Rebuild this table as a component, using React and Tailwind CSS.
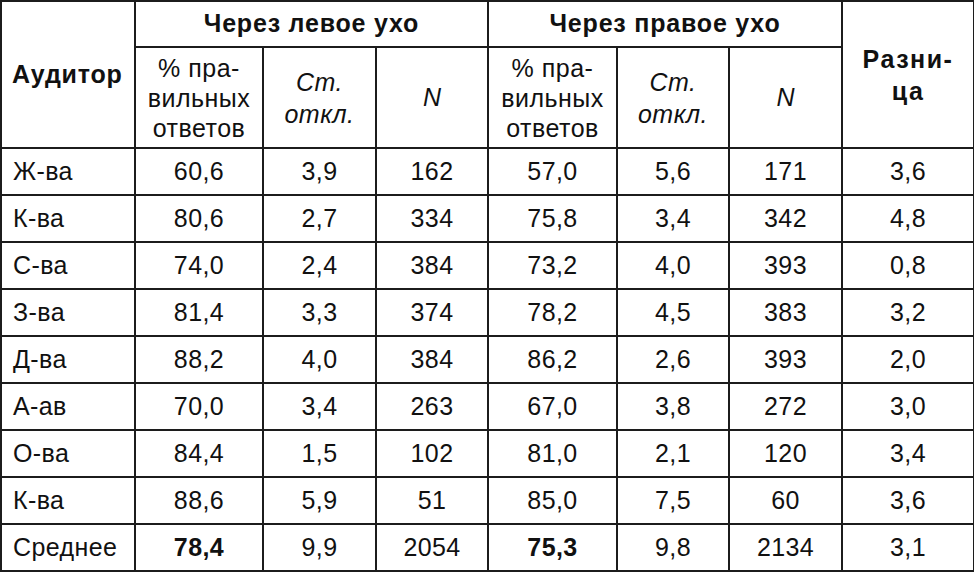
import React from "react";

const rows = [
  ["Ж-ва", "60,6", "3,9", "162", "57,0", "5,6", "171", "3,6"],
  ["К-ва", "80,6", "2,7", "334", "75,8", "3,4", "342", "4,8"],
  ["С-ва", "74,0", "2,4", "384", "73,2", "4,0", "393", "0,8"],
  ["З-ва", "81,4", "3,3", "374", "78,2", "4,5", "383", "3,2"],
  ["Д-ва", "88,2", "4,0", "384", "86,2", "2,6", "393", "2,0"],
  ["А-ав", "70,0", "3,4", "263", "67,0", "3,8", "272", "3,0"],
  ["О-ва", "84,4", "1,5", "102", "81,0", "2,1", "120", "3,4"],
  ["К-ва", "88,6", "5,9", "51", "85,0", "7,5", "60", "3,6"],
];

const cell = "border-2 border-[#1c1c1c] p-0";
const head = "text-[25px] font-bold tracking-[0.8px]";

export default function App() {
  return (
    <div className="w-[974px] h-[572px] bg-white text-[#111] font-['Liberation_Sans',Arial,sans-serif]">
      <table className="border-collapse table-fixed w-[973px] border-2 border-[#1c1c1c]">
        <colgroup>
          <col className="w-[134px]" />
          <col className="w-[128px]" />
          <col className="w-[113px]" />
          <col className="w-[112px]" />
          <col className="w-[129px]" />
          <col className="w-[112px]" />
          <col className="w-[113px]" />
          <col className="w-[132px]" />
        </colgroup>
        <thead>
          <tr className="h-[46px]">
            <th rowSpan={2} className={`${cell} ${head} text-left pl-[10px]`}>
              Аудитор
            </th>
            <th colSpan={3} className={`${cell} ${head}`}>
              Через левое ухо
            </th>
            <th colSpan={3} className={`${cell} ${head}`}>
              Через правое ухо
            </th>
            <th rowSpan={2} className={`${cell} ${head} tracking-[1.5px] leading-[32px]`}>
              Разни-
              <br />
              ца
            </th>
          </tr>
          <tr className="h-[101px]">
            {[0, 1].map((k) => (
              <React.Fragment key={k}>
                <th className={`${cell} font-normal text-[25px] leading-[30px] tracking-[0.5px]`}>
                  % пра-
                  <br />
                  вильных
                  <br />
                  ответов
                </th>
                <th className={`${cell} font-normal italic text-[25px] leading-[32px] tracking-[0.5px]`}>
                  Ст.
                  <br />
                  откл.
                </th>
                <th className={`${cell} font-normal italic text-[25px]`}>N</th>
              </React.Fragment>
            ))}
          </tr>
        </thead>
        <tbody className="text-[25px] tracking-[0.4px]">
          {rows.map((r, i) => (
            <tr key={i} className="h-[47px]">
              <td className={`${cell} text-left pl-[11px]`}>{r[0]}</td>
              {r.slice(1).map((v, j) => (
                <td key={j} className={`${cell} text-center`}>
                  {v}
                </td>
              ))}
            </tr>
          ))}
          <tr className="h-[47px]">
            <td className={`${cell} text-left pl-[11px]`}>Среднее</td>
            <td className={`${cell} text-center font-bold`}>78,4</td>
            <td className={`${cell} text-center`}>9,9</td>
            <td className={`${cell} text-center`}>2054</td>
            <td className={`${cell} text-center font-bold`}>75,3</td>
            <td className={`${cell} text-center`}>9,8</td>
            <td className={`${cell} text-center`}>2134</td>
            <td className={`${cell} text-center`}>3,1</td>
          </tr>
        </tbody>
      </table>
    </div>
  );
}
